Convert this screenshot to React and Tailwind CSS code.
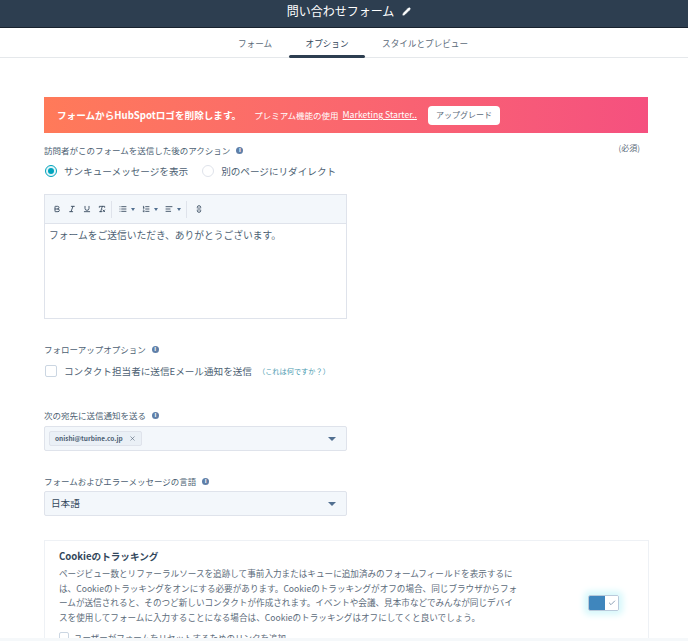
import React from "react";
import { Pencil, Bold, Italic, Underline, RemoveFormatting, List, ListOrdered, AlignLeft, Link2, X, Check } from "lucide-react";

const font = "font-['Noto_Sans_CJK_JP','Noto_Sans',sans-serif]";

const InfoDot = () => (
  <span className="ml-[6px] inline-flex h-[7px] w-[7px] items-center justify-center rounded-full bg-[#5f7fa8] text-[6px] leading-none font-bold text-white">
    i
  </span>
);

const Caret = () => (
  <span className="h-0 w-0 border-x-[4px] border-t-[4px] border-x-transparent border-t-[#516f90]" />
);

const FieldLabel = ({ children, className = "" }) => (
  <div className={`flex items-center text-[8.5px] leading-[14px] text-[#4d5f73] ${className}`}>
    {children}
    <InfoDot />
  </div>
);

const Tool = ({ icon: Icon, caret, className = "" }) => (
  <span className="flex items-center gap-[4px] text-[#33475b]">
    <Icon className={`h-[8px] w-[8px] ${className}`} strokeWidth={2.6} />
    {caret && <span className="h-0 w-0 border-x-[2.5px] border-t-[3px] border-x-transparent border-t-[#516f90]" />}
  </span>
);

export default function App() {
  return (
    <div className={`${font} relative h-[641px] w-[688px] overflow-hidden bg-white`}>
      <header className="flex h-[28px] items-center justify-center gap-[8px] border-b border-[#18222e] bg-[#2d3e50] pb-[5px] pl-[10px] text-white">
        <span className="text-[12px] leading-none">問い合わせフォーム</span>
        <Pencil className="h-[9px] w-[9px] fill-white" strokeWidth={1.5} />
      </header>

      <nav className="flex h-[30px] items-start justify-center border-b border-[#e5e8eb] pl-[18px] text-[8.6px] text-[#5c6b7a]">
        <span className="mr-[17px] mt-[8px] leading-[14px]">フォーム</span>
        <span className="relative mr-[17px] flex h-[30px] w-[76px] justify-center pt-[8px] leading-[14px] text-[#33475b]">
          オプション
          <span className="absolute bottom-0 left-0 h-[3px] w-full rounded-sm bg-[#2d3e50]" />
        </span>
        <span className="mt-[8px] leading-[14px]">スタイルとプレビュー</span>
      </nav>

      <main className="px-[44px] pt-[39px]">
        <div className="flex h-[36px] w-[604px] items-center bg-gradient-to-r from-[#ff7a59] to-[#f5507f] pl-[13px] text-white">
          <span className="text-[9.6px] font-bold">フォームからHubSpotロゴを削除します。</span>
          <span className="ml-[13px] text-[8.5px]">プレミアム機能の使用</span>
          <span className="ml-[4px] text-[8.7px] underline">Marketing Starter..</span>
          <span className="ml-[11px] flex h-[19px] w-[72px] items-center justify-center rounded-sm bg-white text-[8px] text-[#5c6b7a]">
            アップグレード
          </span>
        </div>

        <div className="mt-[9px] flex items-start justify-between">
          <FieldLabel className="mt-[1px]">訪問者がこのフォームを送信した後のアクション</FieldLabel>
          <span className="mr-[4px] text-[8px] leading-[12px] text-[#5c6b7a]">(必須)</span>
        </div>

        <div className="mt-[6px] flex items-center text-[9.6px] leading-[16px] text-[#4d5f73]">
          <span className="ml-[1px] flex h-[12px] w-[12px] items-center justify-center rounded-full border border-[#00a4bd] bg-[#e5f5f8]">
            <span className="h-[6px] w-[6px] rounded-full bg-[#00a4bd]" />
          </span>
          <span className="ml-[7px]">サンキューメッセージを表示</span>
          <span className="ml-[14px] h-[12px] w-[12px] rounded-full border border-[#dfe3eb] bg-white" />
          <span className="ml-[7px]">別のページにリダイレクト</span>
        </div>

        <div className="mt-[15px] h-[125px] w-[303px] border border-[#dfe3eb]">
          <div className="flex h-[29px] items-center border-b border-[#dfe3eb] bg-[#f3f7fb] pl-[8px]">
            <div className="flex items-center gap-[7px]">
              <Tool icon={Bold} />
              <Tool icon={Italic} />
              <Tool icon={Underline} />
              <Tool icon={RemoveFormatting} />
            </div>
            <span className="ml-[5px] mr-[7px] h-[17px] w-px bg-[#dfe3eb]" />
            <div className="flex items-center gap-[7px]">
              <Tool icon={List} caret />
              <Tool icon={ListOrdered} caret />
              <Tool icon={AlignLeft} caret />
            </div>
            <span className="ml-[5px] mr-[8px] h-[17px] w-px bg-[#dfe3eb]" />
            <Tool icon={Link2} className="rotate-90" />
          </div>
          <p className="pl-[4px] pt-[4px] text-[9.75px] leading-[14px] text-[#4d5f73]">
            フォームをご送信いただき、ありがとうございます。
          </p>
        </div>

        <FieldLabel className="mt-[23px]">フォローアップオプション</FieldLabel>
        <div className="mt-[7px] flex items-center text-[9.6px] leading-[16px] text-[#4d5f73]">
          <span className="ml-[1px] h-[12px] w-[12px] rounded-[2px] border border-[#cbd6e2] bg-white" />
          <span className="ml-[7px]">コンタクト担当者に送信Eメール通知を送信</span>
          <span className="ml-[6px] text-[7.2px] text-[#4a9bb0]">（これは何ですか？）</span>
        </div>

        <FieldLabel className="mt-[29px]">次の宛先に送信通知を送る</FieldLabel>
        <div className="mt-[4px] flex h-[25px] w-[303px] items-center justify-between rounded-[2px] border border-[#dfe3eb] bg-[#f3f7fb] pl-[4px] pr-[10px]">
          <span className="flex h-[15px] w-[93px] items-center justify-between rounded-[2px] border border-[#dfe3eb] bg-[#eaf0f6] px-[5px] text-[6.5px] font-bold text-[#4d5f73]">
            onishi@turbine.co.jp
            <X className="h-[7px] w-[7px]" strokeWidth={2} />
          </span>
          <Caret />
        </div>

        <FieldLabel className="mt-[23px]">フォームおよびエラーメッセージの言語</FieldLabel>
        <div className="mt-[3px] flex h-[25px] w-[303px] items-center justify-between rounded-[2px] border border-[#dfe3eb] bg-[#f3f7fb] pl-[6px] pr-[10px] text-[9.6px] text-[#33475b]">
          日本語
          <Caret />
        </div>

        <section className="mt-[24px] h-[120px] w-[605px] border border-[#eef1f5] px-[14px] pt-[7px]">
          <h3 className="text-[9.6px] leading-[16px] font-bold text-[#33475b]">Cookieのトラッキング</h3>
          <div className="mt-[2px] flex items-center">
            <p className="w-[456px] text-[8.6px] leading-[14.5px] whitespace-nowrap text-[#5c6b7a]">
              ページビュー数とリファーラルソースを追跡して事前入力またはキューに追加済みのフォームフィールドを表示するに
              <br />
              は、Cookieのトラッキングをオンにする必要があります。Cookieのトラッキングがオフの場合、同じブラウザからフォ
              <br />
              ームが送信されると、そのつど新しいコンタクトが作成されます。イベントや会議、見本市などでみんなが同じデバイ
              <br />
              スを使用してフォームに入力することになる場合は、Cookieのトラッキングはオフにしてくと良いでしょう。
            </p>
            <div className="ml-[73px] mt-[16px] flex h-[16px] w-[31px] overflow-hidden rounded-[2px] border border-[#b9cadb] shadow-[0_0_6px_4px_#d8f8fb]">
              <span className="w-[16px] bg-[#3f86bd]" />
              <span className="flex flex-1 items-center justify-center bg-white">
                <Check className="h-[8px] w-[8px] text-[#516f90]" strokeWidth={2} />
              </span>
            </div>
          </div>
          <div className="mt-[7px] flex items-center text-[8.5px] leading-[12px] text-[#5c6b7a]">
            <span className="h-[10px] w-[10px] rounded-[2px] border border-[#cbd6e2]" />
            <span className="ml-[5px]">ユーザーがフォームをリセットするためのリンクを追加</span>
          </div>
        </section>
      </main>

      <div className="absolute bottom-0 left-0 h-[3px] w-full bg-[#f5f8fa]" />
    </div>
  );
}
